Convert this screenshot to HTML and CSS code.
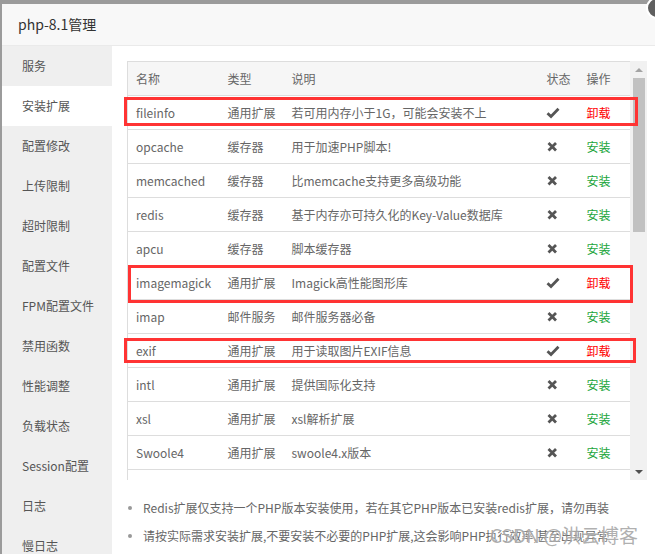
FILE: index.html
```html
<!DOCTYPE html>
<html lang="zh-CN">
<head>
<meta charset="utf-8">
<title>php-8.1管理</title>
<link rel="stylesheet" href="styles.css">
</head>
<body>
<div class="overlay-top"></div>
<div class="dialog">
  <div class="title">php-8.1管理</div>
  <div class="body">
    <div class="side">
      <div class="side-item">服务</div>
      <div class="side-item active">安装扩展</div>
      <div class="side-item">配置修改</div>
      <div class="side-item">上传限制</div>
      <div class="side-item">超时限制</div>
      <div class="side-item">配置文件</div>
      <div class="side-item">FPM配置文件</div>
      <div class="side-item">禁用函数</div>
      <div class="side-item">性能调整</div>
      <div class="side-item">负载状态</div>
      <div class="side-item">Session配置</div>
      <div class="side-item">日志</div>
      <div class="side-item">慢日志</div>
    </div>
    <div class="main">
      <div class="table-box">
        <div class="tbl-wrap">
          <table class="tbl">
            <thead>
              <tr><th class="c-name">名称</th><th class="c-type">类型</th><th class="c-desc">说明</th><th class="c-state">状态</th><th class="c-op">操作</th></tr>
            </thead>
            <tbody>
              <tr><td>fileinfo</td><td>通用扩展</td><td>若可用内存小于1G，可能会安装不上</td><td><svg class="ico" viewBox="0 0 14 12"><path d="M1.5 6.2 L5 9.5 L12.5 1.8" /></svg></td><td class="del">卸载</td></tr>
              <tr><td>opcache</td><td>缓存器</td><td>用于加速PHP脚本!</td><td><svg class="ico x" viewBox="0 0 14 12"><path d="M2.5 2 L10 9.5 M10 2 L2.5 9.5" /></svg></td><td class="add">安装</td></tr>
              <tr><td>memcached</td><td>缓存器</td><td>比memcache支持更多高级功能</td><td><svg class="ico x" viewBox="0 0 14 12"><path d="M2.5 2 L10 9.5 M10 2 L2.5 9.5" /></svg></td><td class="add">安装</td></tr>
              <tr><td>redis</td><td>缓存器</td><td>基于内存亦可持久化的Key-Value数据库</td><td><svg class="ico x" viewBox="0 0 14 12"><path d="M2.5 2 L10 9.5 M10 2 L2.5 9.5" /></svg></td><td class="add">安装</td></tr>
              <tr><td>apcu</td><td>缓存器</td><td>脚本缓存器</td><td><svg class="ico x" viewBox="0 0 14 12"><path d="M2.5 2 L10 9.5 M10 2 L2.5 9.5" /></svg></td><td class="add">安装</td></tr>
              <tr><td>imagemagick</td><td>通用扩展</td><td>Imagick高性能图形库</td><td><svg class="ico" viewBox="0 0 14 12"><path d="M1.5 6.2 L5 9.5 L12.5 1.8" /></svg></td><td class="del">卸载</td></tr>
              <tr><td>imap</td><td>邮件服务</td><td>邮件服务器必备</td><td><svg class="ico x" viewBox="0 0 14 12"><path d="M2.5 2 L10 9.5 M10 2 L2.5 9.5" /></svg></td><td class="add">安装</td></tr>
              <tr><td>exif</td><td>通用扩展</td><td>用于读取图片EXIF信息</td><td><svg class="ico" viewBox="0 0 14 12"><path d="M1.5 6.2 L5 9.5 L12.5 1.8" /></svg></td><td class="del">卸载</td></tr>
              <tr><td>intl</td><td>通用扩展</td><td>提供国际化支持</td><td><svg class="ico x" viewBox="0 0 14 12"><path d="M2.5 2 L10 9.5 M10 2 L2.5 9.5" /></svg></td><td class="add">安装</td></tr>
              <tr><td>xsl</td><td>通用扩展</td><td>xsl解析扩展</td><td><svg class="ico x" viewBox="0 0 14 12"><path d="M2.5 2 L10 9.5 M10 2 L2.5 9.5" /></svg></td><td class="add">安装</td></tr>
              <tr><td>Swoole4</td><td>通用扩展</td><td>swoole4.x版本</td><td><svg class="ico x" viewBox="0 0 14 12"><path d="M2.5 2 L10 9.5 M10 2 L2.5 9.5" /></svg></td><td class="add">安装</td></tr>
              <tr><td></td><td></td><td></td><td></td><td></td></tr>
            </tbody>
          </table>
        </div>
        <div class="sbar">
          <div class="arr up"></div>
          <div class="thumb-area"><div class="thumb"></div></div>
          <div class="arr down"></div>
        </div>
      </div>
      <ul class="notes">
        <li>Redis扩展仅支持一个PHP版本安装使用，若在其它PHP版本已安装redis扩展，请勿再装</li>
        <li>请按实际需求安装扩展,不要安装不必要的PHP扩展,这会影响PHP执行效率,甚至出现异常</li>
        <li>opcache/xcache/apc等脚本缓存扩展,请只安装其中1个,否则可能导致您的站点程序异常</li>
      </ul>
      <div class="mark m1"></div>
      <div class="mark m2"></div>
      <div class="mark m3"></div>
    </div>
  </div>
</div>
<div class="close-btn"></div>
<div class="watermark">CSDN @洪云博客</div>
</body>
</html>
```

FILE: styles.css
```css
* { box-sizing: border-box; }
html, body {
  margin: 0;
  padding: 0;
}
body {
  width: 655px;
  height: 554px;
  overflow: hidden;
  background: #9b9b9b;
  font-family: "Noto Sans CJK SC", "Noto Sans", sans-serif;
  position: relative;
}
.overlay-top {
  height: 4px;
}
.dialog {
  margin-left: 2px;
  width: 680px;
  height: 560px;
  background: #fff;
}
.title {
  height: 42px;
  line-height: 41px;
  background: #f8f8f8;
  border-bottom: 1px solid #eaeaea;
  padding-left: 16px;
  font-size: 14px;
  color: #333;
}
.body {
  display: flex;
}
.side {
  width: 110px;
  flex: none;
  background: #efefef;
  height: 520px;
}
.side-item {
  height: 40px;
  line-height: 40px;
  padding-left: 20px;
  font-size: 12px;
  color: #555;
}
.side-item.active {
  background: #fff;
}
.main {
  position: relative;
  padding: 15px 0 0 15px;
  flex: 1;
}
.table-box {
  display: flex;
  height: 419px;
}
.tbl-wrap {
  width: 503px;
  height: 419px;
  overflow: hidden;
}
.tbl {
  width: 503px;
  border-collapse: collapse;
  table-layout: fixed;
  font-size: 12px;
  color: #666;
}
.tbl th, .tbl td {
  height: 34px;
  padding: 0 0 0 8px;
  border: 1px solid #ddd;
  border-left: none;
  border-right: none;
  text-align: left;
  font-weight: normal;
  white-space: nowrap;
  overflow: hidden;
  vertical-align: middle;
}
.tbl th:first-child, .tbl td:first-child { border-left: 1px solid #ddd; }
.tbl th:last-child, .tbl td:last-child { border-right: 1px solid #ddd; }
.tbl thead th { background: #f6f6f6; }
.c-name { width: 92px; }
.c-type { width: 64px; }
.c-desc { width: 255px; }
.c-state { width: 40px; }
.c-op { width: 52px; }
.ico {
  display: block;
  width: 14px;
  height: 12px;
  fill: none;
  stroke: #555;
  stroke-width: 2.8;
  stroke-linecap: butt;
  stroke-linejoin: miter;
  margin-left: -1px;
}
.del { color: #f00; }
.add { color: #20a53a; }
.sbar {
  width: 17px;
  height: 419px;
  background: #f1f1f1;
  display: flex;
  flex-direction: column;
  align-items: center;
}
.arr {
  height: 17px;
  width: 17px;
  flex: none;
  display: flex;
  align-items: center;
  justify-content: center;
}
.arr::before {
  content: "";
  border-left: 4px solid transparent;
  border-right: 4px solid transparent;
}
.arr.up::before { border-bottom: 4px solid #a3a3a3; }
.arr.down::before { border-top: 4px solid #505050; }
.thumb-area {
  flex: 1;
  width: 17px;
  padding: 0 2px 0 3px;
}
.thumb {
  height: 154px;
  background: #c1c1c1;
}
.notes {
  list-style: none;
  margin: 14px 0 0 0;
  padding: 0;
  font-size: 12px;
  color: #666;
  line-height: 28px;
}
.notes li {
  position: relative;
  padding-left: 16px;
  white-space: nowrap;
}
.notes li::before {
  content: "";
  position: absolute;
  left: 1px;
  top: 12px;
  width: 4px;
  height: 4px;
  border-radius: 50%;
  background: #999;
}
.mark {
  position: absolute;
  border: 3px solid #f33;
}
.m1 { left: 12px; top: 51px; width: 514px; height: 29px; }
.m2 { left: 16px; top: 219px; width: 505px; height: 38px; }
.m3 { left: 12px; top: 292px; width: 512px; height: 25px; }
.close-btn {
  position: absolute;
  left: 646px;
  top: -3px;
  width: 22px;
  height: 22px;
  border-radius: 50%;
  background: #5f5f5f;
  border: 2px solid #fff;
}
.watermark {
  position: absolute;
  left: 490px;
  top: 522px;
  font-size: 19px;
  line-height: 26px;
  color: rgba(150, 150, 150, 0.75);
  text-shadow: 0 0 2px rgba(255, 255, 255, 0.9);
  white-space: nowrap;
}
```
